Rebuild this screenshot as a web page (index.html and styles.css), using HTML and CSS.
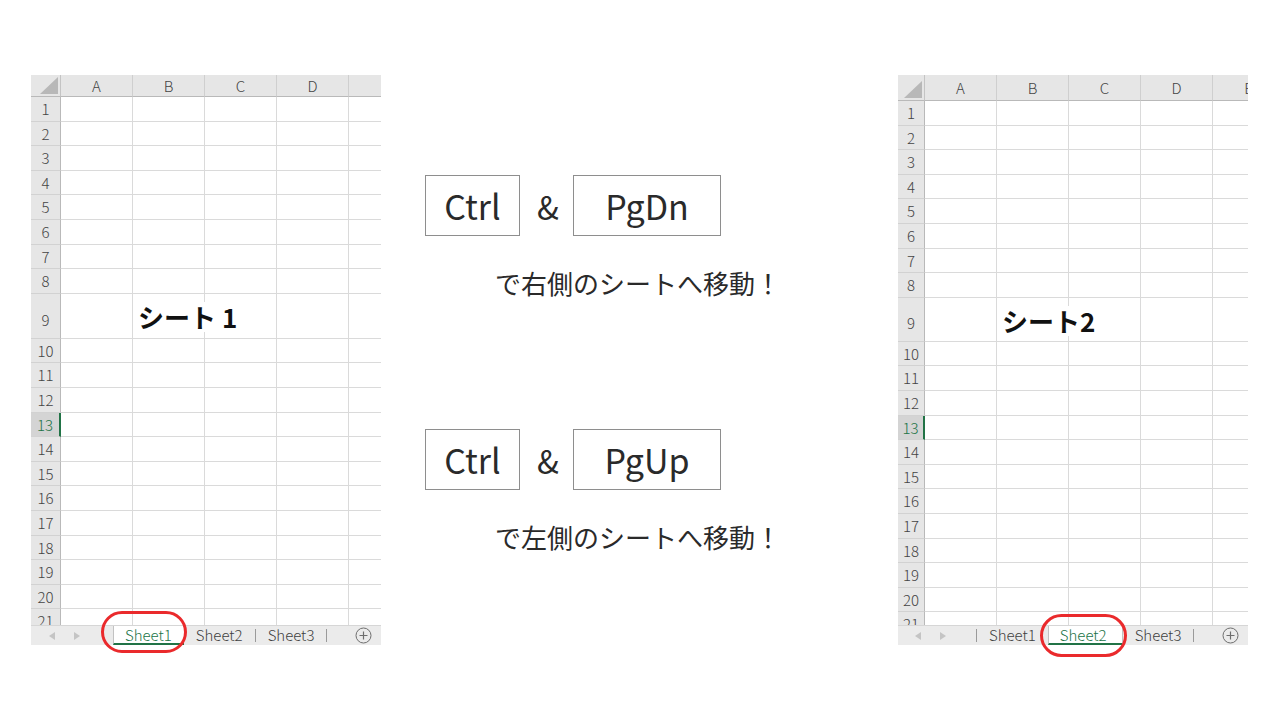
FILE: index.html
```html
<!DOCTYPE html>
<html lang="ja">
<head>
<meta charset="utf-8">
<title>Sheets</title>
<link rel="stylesheet" href="styles.css">
</head>
<body>
<div class="page">

  <div class="sheet s1">
    <div class="grid">
      <div class="colhead">
        <div class="corner"><svg class="tri" width="18" height="17" viewBox="0 0 18 17"><polygon points="18,0 18,17 0,17" fill="#b8b8b8"/></svg></div>
        <div class="ch">A</div><div class="ch">B</div><div class="ch">C</div><div class="ch">D</div><div class="ch">E</div>
      </div>
      <div class="row"><div class="rh">1</div><div class="cells"></div></div>
      <div class="row"><div class="rh">2</div><div class="cells"></div></div>
      <div class="row"><div class="rh">3</div><div class="cells"></div></div>
      <div class="row"><div class="rh">4</div><div class="cells"></div></div>
      <div class="row"><div class="rh">5</div><div class="cells"></div></div>
      <div class="row"><div class="rh">6</div><div class="cells"></div></div>
      <div class="row"><div class="rh">7</div><div class="cells"></div></div>
      <div class="row"><div class="rh">8</div><div class="cells"></div></div>
      <div class="row tall"><div class="rh">9</div><div class="cells"><span class="label">シート 1</span></div></div>
      <div class="row"><div class="rh">10</div><div class="cells"></div></div>
      <div class="row"><div class="rh">11</div><div class="cells"></div></div>
      <div class="row"><div class="rh">12</div><div class="cells"></div></div>
      <div class="row"><div class="rh sel">13</div><div class="cells"></div></div>
      <div class="row"><div class="rh">14</div><div class="cells"></div></div>
      <div class="row"><div class="rh">15</div><div class="cells"></div></div>
      <div class="row"><div class="rh">16</div><div class="cells"></div></div>
      <div class="row"><div class="rh">17</div><div class="cells"></div></div>
      <div class="row"><div class="rh">18</div><div class="cells"></div></div>
      <div class="row"><div class="rh">19</div><div class="cells"></div></div>
      <div class="row"><div class="rh">20</div><div class="cells"></div></div>
      <div class="row"><div class="rh">21</div><div class="cells"></div></div>
    </div>
    <div class="tabbar">
      <div class="nav">
        <svg width="6" height="8" viewBox="0 0 6 8"><polygon points="6,0 6,8 0,4" fill="#c4c4c4"/></svg>
        <svg width="6" height="8" viewBox="0 0 6 8"><polygon points="0,0 0,8 6,4" fill="#c4c4c4"/></svg>
      </div>
      <div class="tab active">Sheet1</div>
      <div class="tab">Sheet2</div>
      <span class="sep"></span>
      <div class="tab">Sheet3</div>
      <span class="sep"></span>
      <div class="plus"><svg width="17" height="17" viewBox="0 0 17 17"><circle cx="8.5" cy="8.5" r="7.5" fill="none" stroke="#6e6e6e" stroke-width="1"/><path d="M8.5 4.5v8M4.5 8.5h8" stroke="#6e6e6e" stroke-width="1.2"/></svg></div>
    </div>
    <div class="ring"></div>
  </div>

  <div class="mid">
    <div class="keys">
      <div class="key ctrl">Ctrl</div>
      <div class="amp">&amp;</div>
      <div class="key pg">PgDn</div>
    </div>
    <p class="desc">で右側のシートへ移動！</p>
    <div class="keys second">
      <div class="key ctrl">Ctrl</div>
      <div class="amp">&amp;</div>
      <div class="key pg">PgUp</div>
    </div>
    <p class="desc">で左側のシートへ移動！</p>
  </div>

  <div class="sheet s2">
    <div class="grid">
      <div class="colhead">
        <div class="corner"><svg class="tri" width="18" height="17" viewBox="0 0 18 17"><polygon points="18,0 18,17 0,17" fill="#b8b8b8"/></svg></div>
        <div class="ch">A</div><div class="ch">B</div><div class="ch">C</div><div class="ch">D</div><div class="ch">E</div>
      </div>
      <div class="row"><div class="rh">1</div><div class="cells"></div></div>
      <div class="row"><div class="rh">2</div><div class="cells"></div></div>
      <div class="row"><div class="rh">3</div><div class="cells"></div></div>
      <div class="row"><div class="rh">4</div><div class="cells"></div></div>
      <div class="row"><div class="rh">5</div><div class="cells"></div></div>
      <div class="row"><div class="rh">6</div><div class="cells"></div></div>
      <div class="row"><div class="rh">7</div><div class="cells"></div></div>
      <div class="row"><div class="rh">8</div><div class="cells"></div></div>
      <div class="row tall"><div class="rh">9</div><div class="cells"><span class="label">シート2</span></div></div>
      <div class="row"><div class="rh">10</div><div class="cells"></div></div>
      <div class="row"><div class="rh">11</div><div class="cells"></div></div>
      <div class="row"><div class="rh">12</div><div class="cells"></div></div>
      <div class="row"><div class="rh sel">13</div><div class="cells"></div></div>
      <div class="row"><div class="rh">14</div><div class="cells"></div></div>
      <div class="row"><div class="rh">15</div><div class="cells"></div></div>
      <div class="row"><div class="rh">16</div><div class="cells"></div></div>
      <div class="row"><div class="rh">17</div><div class="cells"></div></div>
      <div class="row"><div class="rh">18</div><div class="cells"></div></div>
      <div class="row"><div class="rh">19</div><div class="cells"></div></div>
      <div class="row"><div class="rh">20</div><div class="cells"></div></div>
      <div class="row"><div class="rh">21</div><div class="cells"></div></div>
    </div>
    <div class="tabbar">
      <div class="nav">
        <svg width="6" height="8" viewBox="0 0 6 8"><polygon points="6,0 6,8 0,4" fill="#c4c4c4"/></svg>
        <svg width="6" height="8" viewBox="0 0 6 8"><polygon points="0,0 0,8 6,4" fill="#c4c4c4"/></svg>
      </div>
      <span class="sep"></span>
      <div class="tab">Sheet1</div>
      <div class="tab active">Sheet2</div>
      <div class="tab">Sheet3</div>
      <span class="sep"></span>
      <div class="plus"><svg width="17" height="17" viewBox="0 0 17 17"><circle cx="8.5" cy="8.5" r="7.5" fill="none" stroke="#6e6e6e" stroke-width="1"/><path d="M8.5 4.5v8M4.5 8.5h8" stroke="#6e6e6e" stroke-width="1.2"/></svg></div>
    </div>
    <div class="ring"></div>
  </div>

</div>
</body>
</html>
```

FILE: styles.css
```css
* { box-sizing: border-box; margin: 0; padding: 0; }

body {
  margin: 0;
  width: 1280px;
  height: 720px;
  overflow: hidden;
  background: #ffffff;
  font-family: "Noto Sans CJK JP", "Noto Sans", sans-serif;
  color: #222;
}

.page {
  display: flex;
  align-items: flex-start;
  padding: 75px 0 0 31px;
}

/* ---------- spreadsheet ---------- */
.sheet {
  position: relative;
  flex: 0 0 350px;
  width: 350px;
  --rhw: 30px;
  --hh: 22px;
  --tallh: 45px;
}
.s2 {
  --rhw: 27px;
  --hh: 26px;
  --tallh: 44px;
}

.grid {
  height: 550px;
  overflow: hidden;
}

.colhead {
  display: flex;
  height: var(--hh);
}
.corner {
  position: relative;
  flex: 0 0 var(--rhw);
  background: #e6e6e6;
  border-right: 1px solid #c4c4c4;
  border-bottom: 1px solid #b9b9b9;
}
.tri {
  position: absolute;
  right: 2px;
  bottom: 2px;
}
.ch {
  flex: 0 0 72px;
  background: #e6e6e6;
  border-right: 1px solid #cfcfcf;
  border-bottom: 1px solid #b9b9b9;
  color: #444;
  font-size: 15px;
  font-weight: 300;
  line-height: calc(var(--hh) - 1px);
  text-align: center;
}

.row {
  display: flex;
  height: 24.6px;
}
.row.tall { height: var(--tallh); }

.rh {
  flex: 0 0 var(--rhw);
  background: #e6e6e6;
  border-right: 1px solid #b9b9b9;
  border-bottom: 1px solid #d2d2d2;
  color: #444;
  font-size: 15px;
  font-weight: 300;
  line-height: 23.6px;
  text-align: center;
}
.row.tall .rh {
  display: flex;
  align-items: flex-end;
  justify-content: center;
  padding-bottom: 6px;
}
.rh.sel {
  background: #d4d4d4;
  color: #217346;
  border-right: 2px solid #217346;
}

.cells {
  flex: 1;
  display: flex;
  align-items: center;
  border-bottom: 1px solid #dadada;
  background: repeating-linear-gradient(to right, transparent 0 71px, #dadada 71px 72px);
}

.label {
  margin-left: 77px;
  padding-right: 6px;
  margin-top: 3px;
  background: #fff;
  font-size: 26px;
  line-height: 30px;
  font-weight: 700;
  color: #111;
  white-space: nowrap;
}

/* ---------- tab bar ---------- */
.tabbar {
  display: flex;
  align-items: stretch;
  height: 20px;
  background: #ebebeb;
  border-top: 1px solid #d6d6d6;
  font-size: 15px;
  font-weight: 300;
  line-height: 18px;
  color: #404040;
  overflow: hidden;
}
.nav {
  flex: 0 0 82px;
  display: flex;
  align-items: center;
  gap: 19px;
  padding-left: 18px;
}
.s2 .nav { flex-basis: 78px; padding-left: 17px; }

.tab {
  padding: 0 12px;
  white-space: nowrap;
}
.tab.active {
  background: #fff;
  color: #217346;
  border-left: 1px solid #c2c2c2;
  border-bottom: 2px solid #217346;
  padding: 0 12px 0 11px;
}
.s2 .tab.active {
  border-right: 1px solid #c2c2c2;
  padding: 0 15px 0 11px;
}
.sep {
  align-self: center;
  width: 1px;
  height: 13px;
  background: #9a9a9a;
}
.plus {
  margin-left: auto;
  margin-right: 9px;
  display: flex;
  align-items: center;
}

.ring {
  position: absolute;
  left: 70px;
  top: 536px;
  width: 86px;
  height: 42px;
  border: 3px solid #ea2a2c;
  border-radius: 22px;
}
.s2 .ring {
  left: 142px;
  top: 539px;
  width: 87px;
  height: 43px;
}

/* ---------- middle ---------- */
.mid {
  flex: 0 0 517px;
  padding: 100px 0 0 44px;
}
.keys {
  display: flex;
  align-items: center;
}
.keys.second { margin-top: 130px; }
.key {
  height: 61px;
  border: 1px solid #8e8e8e;
  display: flex;
  align-items: center;
  justify-content: center;
  font-size: 34px;
  font-weight: 400;
  line-height: 40px;
  color: #2a2a2a;
}
.key.ctrl { width: 95px; }
.key.pg { width: 148px; }
.amp {
  width: 53px;
  padding-left: 3px;
  text-align: center;
  font-size: 32px;
  font-weight: 400;
  line-height: 40px;
  color: #2a2a2a;
}
.desc {
  margin: 31px 0 0 70px;
  font-size: 26px;
  font-weight: 400;
  line-height: 32px;
  color: #2a2a2a;
  white-space: nowrap;
}
```
